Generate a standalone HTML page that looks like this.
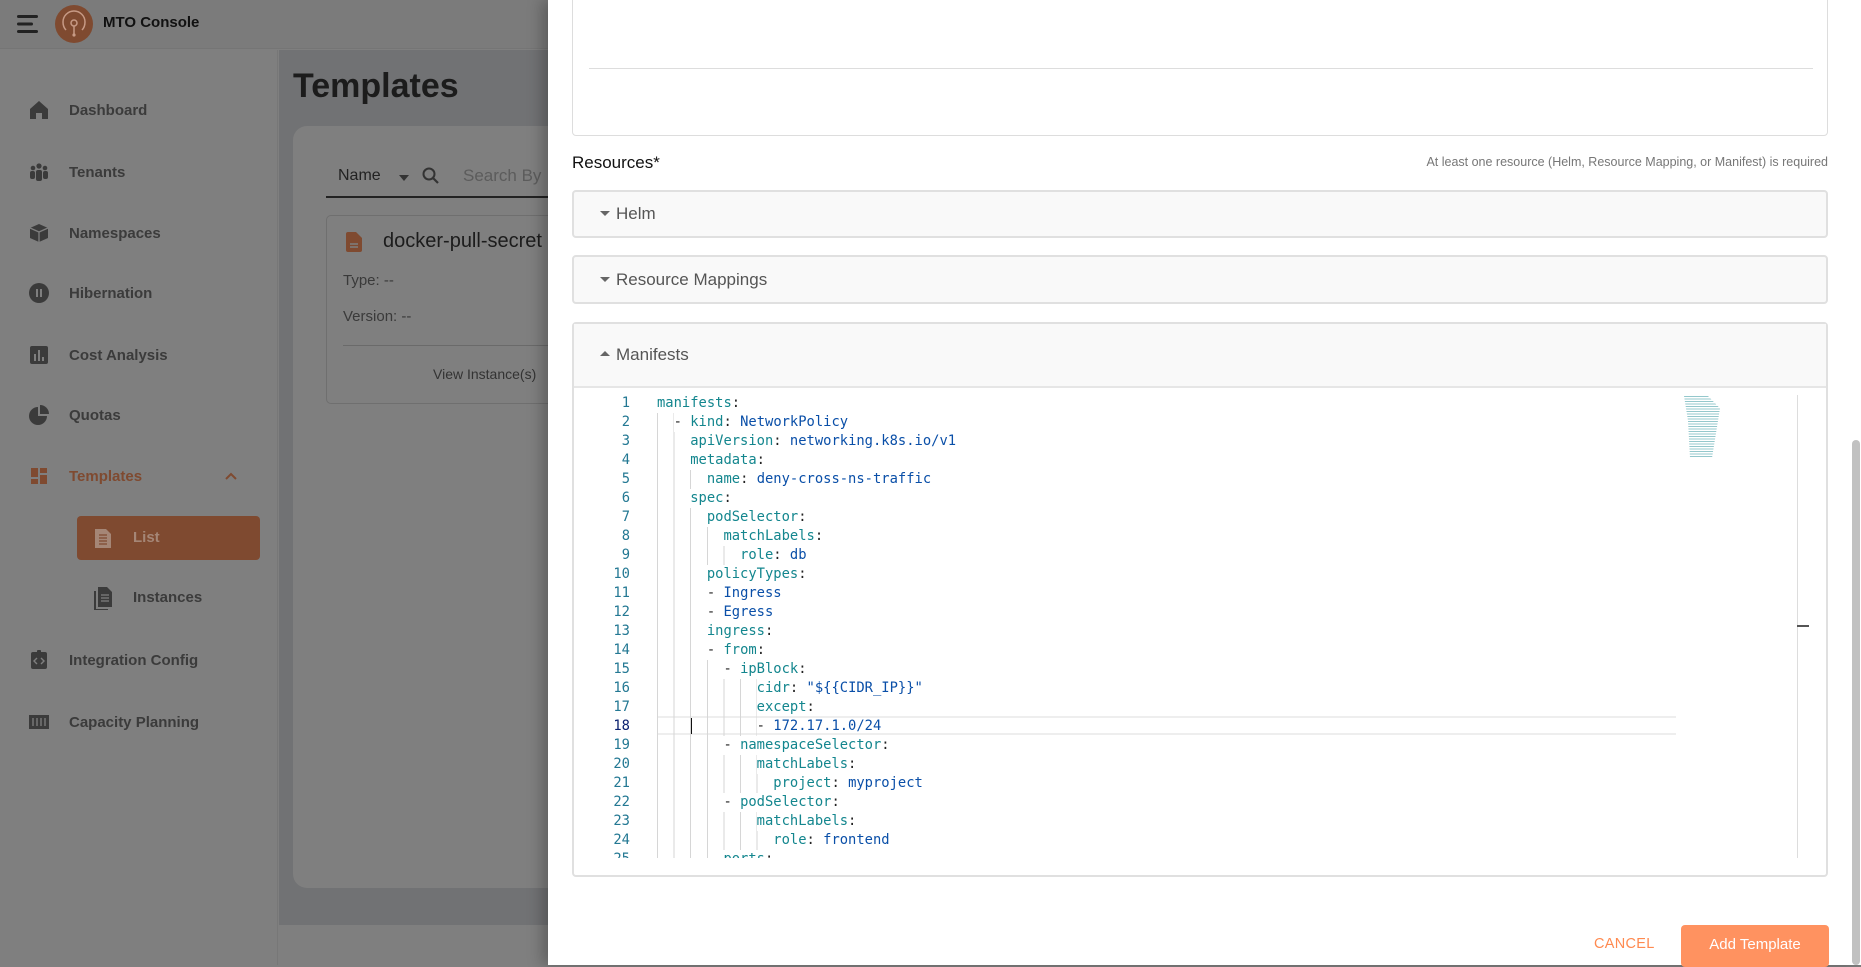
<!DOCTYPE html>
<html><head><meta charset="utf-8">
<style>
*{box-sizing:border-box;margin:0;padding:0}
body{width:1861px;height:965px;overflow:hidden;position:relative;font-family:"Liberation Sans",sans-serif;background:#7f7f7f}
.abs{position:absolute}
.top{left:0;top:0;width:1861px;height:49px;background:#7b7b7b;border-bottom:1px solid #757575}
.side{left:0;top:50px;width:278px;height:915px;background:#7f7f7f;border-right:1px solid #777}
.main{left:279px;top:50px;width:1582px;height:915px;background:#717274}
.nav{position:absolute;left:0;width:278px;height:30px;display:flex;align-items:center;font-size:15px;font-weight:bold;color:#3b3b3b}
.nav .ic{position:absolute;left:28px;width:22px;height:22px}
.nav span{position:absolute;left:69px}
.code{font-family:"DejaVu Sans Mono",monospace;font-size:13.8px}
.ln{position:absolute;left:0;height:19px;line-height:19px;white-space:pre}
.num{position:absolute;width:60px;text-align:right;color:#237893}
.g{display:inline-block;height:19px;vertical-align:top;background:repeating-linear-gradient(to right,#d6d6d6 0 1px,transparent 1px 2ch)}
.k{color:#13868e}.v{color:#0a4fa8}.p{color:#222}
.panel{position:absolute;left:572px;width:1256px;background:#f9f9f9;border:2px solid #e0e0e0;border-radius:4px}
.panel .t{position:absolute;left:42px;font-size:17px;color:#555}
.panel .a{position:absolute;left:26px;width:0;height:0;border-left:5px solid transparent;border-right:5px solid transparent}
</style></head><body>
<div class="abs top"></div>
<svg class="abs" style="left:17px;top:14px" width="22" height="20"><rect x="0" y="1" width="21" height="3" rx="1.5" fill="#222"/><rect x="0" y="8.5" width="16" height="3" rx="1.5" fill="#222"/><rect x="0" y="16" width="21" height="3" rx="1.5" fill="#222"/></svg>
<svg class="abs" style="left:54px;top:4px" width="40" height="40"><circle cx="20" cy="20" r="19" fill="#7f4a30"/><path d="M12 26c-2-2-3-5-3-8a11 11 0 0 1 22 0c0 3-1 6-3 8" fill="none" stroke="#c79a85" stroke-width="1.5"/><circle cx="20" cy="19" r="3" fill="none" stroke="#c79a85" stroke-width="1.5"/><path d="M20 22v8" stroke="#c79a85" stroke-width="1.5"/><circle cx="20" cy="31" r="1.6" fill="#c79a85"/></svg>
<div class="abs" style="left:103px;top:14px;font-size:15px;font-weight:bold;color:#111">MTO Console</div>
<div class="abs side"></div>
<div class="nav" style="top:95px"><svg class="ic" viewBox="0 0 22 22"><path d="M2 10L11 2l9 8v10h-6v-6H8v6H2z" fill="#3b3b3b"/></svg><span>Dashboard</span></div>
<div class="nav" style="top:157px"><svg class="ic" viewBox="0 0 22 22"><circle cx="5" cy="7" r="2.3" fill="#3b3b3b"/><circle cx="11" cy="5" r="2.6" fill="#3b3b3b"/><circle cx="17" cy="7" r="2.3" fill="#3b3b3b"/><rect x="2" y="10" width="5" height="8" rx="2" fill="#3b3b3b"/><rect x="8" y="9" width="6" height="11" rx="2" fill="#3b3b3b"/><rect x="15" y="10" width="5" height="8" rx="2" fill="#3b3b3b"/></svg><span>Tenants</span></div>
<div class="nav" style="top:218px"><svg class="ic" viewBox="0 0 22 22"><path d="M11 2l9 4v10l-9 4-9-4V6z" fill="#3b3b3b"/><path d="M2 6l9 4 9-4M11 10v10" stroke="#7f7f7f" stroke-width="1.3" fill="none"/></svg><span>Namespaces</span></div>
<div class="nav" style="top:278px"><svg class="ic" viewBox="0 0 22 22"><circle cx="11" cy="11" r="10" fill="#3b3b3b"/><rect x="8" y="7" width="2" height="8" fill="#7f7f7f"/><rect x="12" y="7" width="2" height="8" fill="#7f7f7f"/></svg><span>Hibernation</span></div>
<div class="nav" style="top:340px"><svg class="ic" viewBox="0 0 22 22"><rect x="2" y="2" width="18" height="18" rx="2" fill="#3b3b3b"/><rect x="6" y="10" width="2" height="7" fill="#7f7f7f"/><rect x="10" y="6" width="2" height="11" fill="#7f7f7f"/><rect x="14" y="13" width="2" height="4" fill="#7f7f7f"/></svg><span>Cost Analysis</span></div>
<div class="nav" style="top:400px"><svg class="ic" viewBox="0 0 22 22"><path d="M10 3a9 9 0 1 0 9 9h-9z" fill="#3b3b3b"/><path d="M12 1v9h9a9 9 0 0 0-9-9z" fill="#3b3b3b"/></svg><span>Quotas</span></div>
<div class="nav" style="top:461px;color:#7f4a30"><svg class="ic" viewBox="0 0 22 22"><rect x="3" y="3" width="7" height="9" fill="#7f4a30"/><rect x="12" y="3" width="7" height="5" fill="#7f4a30"/><rect x="3" y="14" width="7" height="5" fill="#7f4a30"/><rect x="12" y="10" width="7" height="9" fill="#7f4a30"/></svg><span>Templates</span><svg class="abs" style="left:224px;top:10px" width="14" height="10"><path d="M2 8l5-5 5 5" stroke="#7f4a30" stroke-width="2" fill="none"/></svg></div>
<div class="abs" style="left:77px;top:516px;width:183px;height:44px;background:#7f4a30;border-radius:4px"></div>
<svg class="abs" style="left:94px;top:527px" width="18" height="22"><path d="M1 2h11l5 5v14H1z" fill="#a58676"/><path d="M5 8h8M5 11h8M5 14h8M5 17h8" stroke="#7f4a30" stroke-width="1.2"/></svg>
<div class="abs" style="left:133px;top:529px;font-size:15px;font-weight:bold;color:#a58676">List</div>
<svg class="abs" style="left:94px;top:587px" width="18" height="23"><path d="M4 0h9l5 5v15H4z" fill="#3b3b3b"/><path d="M1 4v19h13" stroke="#3b3b3b" stroke-width="2" fill="none"/><path d="M7 8h8M7 11h8M7 14h8" stroke="#7f7f7f" stroke-width="1.2"/></svg>
<div class="abs" style="left:133px;top:589px;font-size:15px;font-weight:bold;color:#3b3b3b">Instances</div>
<div class="nav" style="top:645px"><svg class="ic" viewBox="0 0 22 22"><rect x="3" y="3" width="16" height="17" rx="2" fill="#3b3b3b"/><rect x="9" y="1" width="4" height="4" rx="1" fill="#3b3b3b"/><path d="M9 9l-3 3 3 3M13 9l3 3-3 3" stroke="#7f7f7f" stroke-width="1.4" fill="none"/></svg><span>Integration Config</span></div>
<div class="nav" style="top:707px"><svg class="ic" viewBox="0 0 22 22"><rect x="1" y="4" width="20" height="14" fill="#3b3b3b"/><path d="M5 7v8M9 7v8M13 7v8M17 7v8" stroke="#7f7f7f" stroke-width="1.3"/></svg><span>Capacity Planning</span></div>
<div class="abs main"></div>
<div class="abs" style="left:293px;top:67px;font-size:34px;font-weight:bold;color:#1c1c1c">Templates</div>
<div class="abs" style="left:293px;top:126px;width:300px;height:762px;background:#7f7f7f;border-radius:14px"></div>
<div class="abs" style="left:279px;top:925px;width:300px;height:40px;background:#7f7f7f"></div>
<div class="abs" style="left:338px;top:167px;font-size:16px;color:#222">Name</div>
<svg class="abs" style="left:398px;top:174px" width="12" height="8"><path d="M1 1h10L6 7z" fill="#333"/></svg>
<svg class="abs" style="left:421px;top:166px" width="20" height="20"><circle cx="8" cy="8" r="5.5" stroke="#333" stroke-width="2" fill="none"/><path d="M12 12l5 5" stroke="#333" stroke-width="2.2"/></svg>
<div class="abs" style="left:463px;top:166px;font-size:17px;color:#5c5c5c">Search By</div>
<div class="abs" style="left:326px;top:196px;width:240px;height:2px;background:#222"></div>
<div class="abs" style="left:326px;top:215px;width:240px;height:189px;border:1px solid #6f6f6f;border-radius:5px"></div>
<svg class="abs" style="left:346px;top:232px" width="16" height="20"><path d="M0 2a2 2 0 0 1 2-2h8l6 6v12a2 2 0 0 1-2 2H2a2 2 0 0 1-2-2z" fill="#7f4a30"/><path d="M4 12h8M4 15h8" stroke="#7f7f7f" stroke-width="1.4"/></svg>
<div class="abs" style="left:383px;top:230px;font-size:20px;color:#1c1c1c">docker-pull-secret</div>
<div class="abs" style="left:343px;top:272px;font-size:15px;color:#3a3a3a">Type: --</div>
<div class="abs" style="left:343px;top:308px;font-size:15px;color:#3a3a3a">Version: --</div>
<div class="abs" style="left:343px;top:345px;width:220px;height:1px;background:#6a6a6a"></div>
<div class="abs" style="left:433px;top:366px;font-size:14px;color:#333">View Instance(s)</div>

<!-- drawer -->
<div class="abs" style="left:548px;top:0;width:1313px;height:965px;background:#fff;box-shadow:-6px 0 14px rgba(0,0,0,.25)"></div>
<div class="abs" style="left:1852px;top:440px;width:8px;height:525px;background:#c1c1c1;border-radius:4px"></div>
<div class="abs" style="left:572px;top:-10px;width:1256px;height:146px;border:1px solid #ddd;border-radius:4px"></div>
<div class="abs" style="left:589px;top:68px;width:1224px;height:1px;background:#ddd"></div>
<div class="abs" style="left:572px;top:153px;font-size:17px;font-weight:500;color:#111">Resources*</div>
<div class="abs" style="left:1300px;top:155px;width:528px;text-align:right;font-size:12.5px;color:#777">At least one resource (Helm, Resource Mapping, or Manifest) is required</div>
<div class="panel" style="top:190px;height:48px"><div class="a" style="top:19px;border-top:5px solid #666"></div><div class="t" style="top:12px">Helm</div></div>
<div class="panel" style="top:255px;height:49px"><div class="a" style="top:20px;border-top:5px solid #666"></div><div class="t" style="top:13px">Resource Mappings</div></div>
<div class="panel" style="top:322px;height:555px;background:#fff"><div style="position:absolute;left:0;top:0;width:100%;height:64px;background:#f9f9f9;border-bottom:2px solid #e6e6e6"></div><div class="a" style="top:27px;border-bottom:5px solid #666"></div><div class="t" style="top:21px">Manifests</div></div>

<div class="abs code" style="left:570px;top:394px;width:1240px;height:464px;overflow:hidden">
<div class="abs" style="left:87px;top:322px;width:1019px;height:19px;border-top:2px solid #eee;border-bottom:2px solid #eee"></div>
<div class="abs" style="left:120px;top:324px;width:2px;height:16px;background:#111"></div>
<div class="abs" style="left:1227px;top:1px;width:1px;height:463px;background:#ddd"></div>
<div class="abs" style="left:1227px;top:231px;width:12px;height:2px;background:#555"></div>
<div class="abs" style="left:1114px;top:2px;width:40px;height:62px;background:repeating-linear-gradient(to bottom,rgba(19,134,142,.45) 0 1px,transparent 1px 2.5px);clip-path:polygon(0 0,60% 0,90% 20%,70% 100%,15% 100%,10% 40%)"></div>
<div style="position:absolute;left:87px;top:0">
<div class="ln" style="top:0"><span class="k">manifests</span><span class="p">:</span></div>
<div class="ln" style="top:19px"><span class="g" style="width:2ch"></span><span class="p">- </span><span class="k">kind</span><span class="p">: </span><span class="v">NetworkPolicy</span></div>
<div class="ln" style="top:38px"><span class="g" style="width:4ch"></span><span class="k">apiVersion</span><span class="p">: </span><span class="v">networking.k8s.io/v1</span></div>
<div class="ln" style="top:57px"><span class="g" style="width:4ch"></span><span class="k">metadata</span><span class="p">:</span></div>
<div class="ln" style="top:76px"><span class="g" style="width:6ch"></span><span class="k">name</span><span class="p">: </span><span class="v">deny-cross-ns-traffic</span></div>
<div class="ln" style="top:95px"><span class="g" style="width:4ch"></span><span class="k">spec</span><span class="p">:</span></div>
<div class="ln" style="top:114px"><span class="g" style="width:6ch"></span><span class="k">podSelector</span><span class="p">:</span></div>
<div class="ln" style="top:133px"><span class="g" style="width:8ch"></span><span class="k">matchLabels</span><span class="p">:</span></div>
<div class="ln" style="top:152px"><span class="g" style="width:10ch"></span><span class="k">role</span><span class="p">: </span><span class="v">db</span></div>
<div class="ln" style="top:171px"><span class="g" style="width:6ch"></span><span class="k">policyTypes</span><span class="p">:</span></div>
<div class="ln" style="top:190px"><span class="g" style="width:6ch"></span><span class="p">- </span><span class="v">Ingress</span></div>
<div class="ln" style="top:209px"><span class="g" style="width:6ch"></span><span class="p">- </span><span class="v">Egress</span></div>
<div class="ln" style="top:228px"><span class="g" style="width:6ch"></span><span class="k">ingress</span><span class="p">:</span></div>
<div class="ln" style="top:247px"><span class="g" style="width:6ch"></span><span class="p">- </span><span class="k">from</span><span class="p">:</span></div>
<div class="ln" style="top:266px"><span class="g" style="width:8ch"></span><span class="p">- </span><span class="k">ipBlock</span><span class="p">:</span></div>
<div class="ln" style="top:285px"><span class="g" style="width:12ch"></span><span class="k">cidr</span><span class="p">: </span><span class="v">"${{CIDR_IP}}"</span></div>
<div class="ln" style="top:304px"><span class="g" style="width:12ch"></span><span class="k">except</span><span class="p">:</span></div>
<div class="ln" style="top:323px"><span class="g" style="width:12ch"></span><span class="p">- </span><span class="v">172.17.1.0/24</span></div>
<div class="ln" style="top:342px"><span class="g" style="width:8ch"></span><span class="p">- </span><span class="k">namespaceSelector</span><span class="p">:</span></div>
<div class="ln" style="top:361px"><span class="g" style="width:12ch"></span><span class="k">matchLabels</span><span class="p">:</span></div>
<div class="ln" style="top:380px"><span class="g" style="width:14ch"></span><span class="k">project</span><span class="p">: </span><span class="v">myproject</span></div>
<div class="ln" style="top:399px"><span class="g" style="width:8ch"></span><span class="p">- </span><span class="k">podSelector</span><span class="p">:</span></div>
<div class="ln" style="top:418px"><span class="g" style="width:12ch"></span><span class="k">matchLabels</span><span class="p">:</span></div>
<div class="ln" style="top:437px"><span class="g" style="width:14ch"></span><span class="k">role</span><span class="p">: </span><span class="v">frontend</span></div>
<div class="ln" style="top:456px"><span class="g" style="width:8ch"></span><span class="k">ports</span><span class="p">:</span></div>
</div>
<div class="num" style="left:0;top:0;line-height:19px;white-space:pre">1
2
3
4
5
6
7
8
9
10
11
12
13
14
15
16
17
<span style="color:#0b216f">18</span>
19
20
21
22
23
24
25</div>
</div>

<div class="abs" style="left:1594px;top:936px;font-size:14.5px;color:#ff8a50;letter-spacing:.3px">CANCEL</div>
<div class="abs" style="left:1681px;top:925px;width:148px;height:42px;background:#ff9260;border-radius:4px;color:#fff;font-size:15px;text-align:center;line-height:40px">Add Template</div>
</body></html>
